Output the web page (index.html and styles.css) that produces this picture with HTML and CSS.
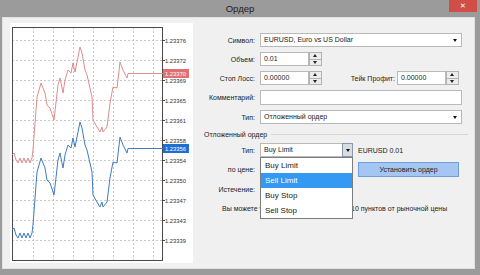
FILE: index.html
```html
<!DOCTYPE html>
<html>
<head>
    <meta charset="UTF-8">
    <title>Ордер</title>
    <link rel="stylesheet" href="styles.css">
</head>
<body>
    <div class="titlebar">
        <span></span>
        <span class="title">Ордер</span>
        <span class="close">&#x2715;</span>
    </div>
    <div class="window-body">
        <div class="chart">
            <svg width="183" height="240" viewBox="10 23 183 240">
                <g class="grid">
                    <line x1="33" y1="27" x2="33" y2="261"/>
                    <line x1="53" y1="27" x2="53" y2="261"/>
                    <line x1="73" y1="27" x2="73" y2="261"/>
                    <line x1="93" y1="27" x2="93" y2="261"/>
                    <line x1="113" y1="27" x2="113" y2="261"/>
                    <line x1="133" y1="27" x2="133" y2="261"/>
                    <line x1="153" y1="27" x2="153" y2="261"/>
                    <line x1="12" y1="40" x2="162" y2="40"/>
                    <line x1="12" y1="60" x2="162" y2="60"/>
                    <line x1="12" y1="80" x2="162" y2="80"/>
                    <line x1="12" y1="100" x2="162" y2="100"/>
                    <line x1="12" y1="120" x2="162" y2="120"/>
                    <line x1="12" y1="140" x2="162" y2="140"/>
                    <line x1="12" y1="160" x2="162" y2="160"/>
                    <line x1="12" y1="180" x2="162" y2="180"/>
                    <line x1="12" y1="200" x2="162" y2="200"/>
                    <line x1="12" y1="220" x2="162" y2="220"/>
                    <line x1="12" y1="240" x2="162" y2="240"/>
                </g>
                <rect class="frame" x="12.5" y="27.5" width="150" height="233"/>
                <g class="ticks">
                    <line x1="162" y1="40.5" x2="165" y2="40.5"/>
                    <line x1="162" y1="60.5" x2="165" y2="60.5"/>
                    <line x1="162" y1="80.5" x2="165" y2="80.5"/>
                    <line x1="162" y1="100.5" x2="165" y2="100.5"/>
                    <line x1="162" y1="120.5" x2="165" y2="120.5"/>
                    <line x1="162" y1="140.5" x2="165" y2="140.5"/>
                    <line x1="162" y1="160.5" x2="165" y2="160.5"/>
                    <line x1="162" y1="180.5" x2="165" y2="180.5"/>
                    <line x1="162" y1="200.5" x2="165" y2="200.5"/>
                    <line x1="162" y1="220.5" x2="165" y2="220.5"/>
                    <line x1="162" y1="240.5" x2="165" y2="240.5"/>
                </g>
                <g class="prices">
                    <text x="165" y="42.5">1.23376</text>
                    <text x="165" y="62.5">1.23372</text>
                    <text x="165" y="82.5">1.23369</text>
                    <text x="165" y="102.5">1.23365</text>
                    <text x="165" y="122.5">1.23361</text>
                    <text x="165" y="142.5">1.23358</text>
                    <text x="165" y="162.5">1.23354</text>
                    <text x="165" y="182.5">1.23350</text>
                    <text x="165" y="202.5">1.23347</text>
                    <text x="165" y="222.5">1.23343</text>
                    <text x="165" y="242.5">1.23339</text>
                </g>
                <polyline class="ask" points="12,155 14,153 16,160 18,163 20,158 22,163 24,158 26,163 28,158 30,163 32,158 33,150 37,97 41,83 45,93 47,105 50,108 54,120 58,85 60,78 63,93 65,80 68,70 71,73 73,63 75,72 77,62 80,47 82,53 85,70 87,75 92,97 93,120 97,127 100,132 102,127 103,132 107,127 110,103 113,87 117,88 120,62 123,70 127,78 128,73.5 163,73.5"/>
                <polyline class="bid" points="12,230 14,228 16,235 18,238 20,233 22,238 24,233 26,238 28,233 30,238 32,233 33,225 37,172 41,158 45,168 47,180 50,183 54,195 58,160 60,153 63,168 65,155 68,145 71,148 73,138 75,147 77,137 80,122 82,128 85,145 87,150 92,172 93,195 97,202 100,207 102,202 103,207 107,202 110,178 113,162 117,163 120,137 123,145 127,153 128,148.5 163,148.5"/>
                <rect class="ask-tag" x="163" y="69" width="26" height="9"/>
                <text class="tag-text" x="165" y="76">1.23370</text>
                <rect class="bid-tag" x="163" y="144" width="26" height="9"/>
                <text class="tag-text" x="165" y="151">1.23356</text>
            </svg>
        </div>

        <div class="form">
            <div class="row">
                <label>Символ:</label>
                <div class="select wide">EURUSD, Euro vs US Dollar<span class="arrow"></span></div>
            </div>
            <div class="row">
                <label>Объем:</label>
                <div class="field">
                    <div class="input">0.01</div>
                    <div class="spin"><span class="up"></span><span class="down"></span></div>
                </div>
            </div>
            <div class="row">
                <label>Стоп Лосс:</label>
                <div class="field">
                    <div class="input">0.00000</div>
                    <div class="spin"><span class="up"></span><span class="down"></span></div>
                    <label class="tp-label">Тейк Профит:</label>
                    <div class="input">0.00000</div>
                    <div class="spin"><span class="up"></span><span class="down"></span></div>
                </div>
            </div>
            <div class="row tall">
                <label>Комментарий:</label>
                <div class="input wide"></div>
            </div>
            <div class="row">
                <label>Тип:</label>
                <div class="select wide">Отложенный ордер<span class="arrow"></span></div>
            </div>

            <div class="group">
                <div class="legend"><span>Отложенный ордер</span></div>
                <div class="row">
                    <label>Тип:</label>
                    <div class="field">
                        <div class="combo">
                            <div class="select short">Buy Limit<span class="drop-btn"><span class="arrow"></span></span></div>
                            <ul class="dropdown">
                                <li>Buy Limit</li>
                                <li class="active">Sell Limit</li>
                                <li>Buy Stop</li>
                                <li>Sell Stop</li>
                            </ul>
                        </div>
                        <span class="lot">EURUSD 0.01</span>
                    </div>
                </div>
                <div class="row price-row">
                    <label>по цене:</label>
                    <div class="field">
                        <div class="input short"></div>
                        <button class="place">Установить ордер</button>
                    </div>
                </div>
                <div class="row">
                    <label>Истечение:</label>
                    <div></div>
                </div>
                <p class="note">Вы можете установить ордер не ближе 10 пунктов от рыночной цены</p>
            </div>
        </div>
    </div>
</body>
</html>
```

FILE: styles.css
```css
* {
    box-sizing: border-box;
}

body {
    margin: 0;
    width: 480px;
    height: 275px;
    overflow: hidden;
    background-color: #9b9b9b;
    font-family: "Liberation Sans", Arial, sans-serif;
    font-size: 7px;
    color: #222;
}

.titlebar {
    display: grid;
    grid-template-columns: 1fr auto 1fr;
    height: 17px;
}

.title {
    font-size: 9.5px;
    color: #1c1c1c;
    padding-top: 3px;
}

.close {
    justify-self: end;
    width: 28px;
    height: 12px;
    margin-right: 3px;
    background-color: #cf4f48;
    color: #fff;
    font-size: 7px;
    line-height: 12px;
    text-align: center;
}

.window-body {
    display: flex;
    height: 252px;
    margin: 0 5px 0 2px;
    background-color: #f0f0f0;
    border: 1px solid #e2e2e2;
}

/* chart */
.chart {
    width: 183px;
    height: 240px;
    margin: 5px 0 0 7px;
    background-color: #fff;
}

.chart svg {
    display: block;
}

.grid line {
    stroke: #c9c9c9;
    stroke-width: 1;
    stroke-dasharray: 2 2;
    shape-rendering: crispEdges;
}

.frame {
    fill: none;
    stroke: #4a4a4a;
    stroke-width: 1;
}

.ticks line {
    stroke: #4a4a4a;
    stroke-width: 1;
}

.prices text,
.tag-text {
    font-family: "Liberation Sans", Arial, sans-serif;
    font-size: 5.8px;
    fill: #333;
}

.tag-text {
    fill: #fff;
}

.ask {
    fill: none;
    stroke: #e08d8d;
    stroke-width: 1;
}

.bid {
    fill: none;
    stroke: #3f7cc2;
    stroke-width: 1;
}

.ask-tag {
    fill: #e27070;
}

.bid-tag {
    fill: #1f6fd2;
}

/* form */
.form {
    width: 268px;
    margin-left: 7px;
    padding-top: 15px;
}

.row {
    display: grid;
    grid-template-columns: 55px 1fr;
    column-gap: 5px;
    align-items: center;
    height: 14px;
    margin-bottom: 5px;
}

.row.tall {
    height: 15px;
}

.row label {
    text-align: right;
    white-space: nowrap;
}

.field {
    display: flex;
    align-items: center;
    height: 100%;
}

.select,
.input {
    position: relative;
    height: 14px;
    line-height: 12px;
    padding-left: 3px;
    background-color: #fff;
    border: 1px solid #b9b9b9;
    white-space: nowrap;
}

.row.tall .input {
    height: 15px;
}

.wide {
    width: 202px;
}

.field .input {
    width: 49px;
}

.field .input.short {
    width: 93px;
}

.arrow {
    position: absolute;
    right: 4px;
    top: 5px;
    border-left: 2.5px solid transparent;
    border-right: 2.5px solid transparent;
    border-top: 3px solid #111;
}

.spin {
    display: flex;
    flex-direction: column;
    width: 13px;
    height: 14px;
}

.spin span {
    position: relative;
    flex: 1;
    background-color: #ececec;
    border: 1px solid #b3b3b3;
}

.spin .down {
    border-top: none;
}

.spin .up::after,
.spin .down::after {
    content: "";
    position: absolute;
    left: 3px;
    border-left: 2.5px solid transparent;
    border-right: 2.5px solid transparent;
}

.spin .up::after {
    top: 1px;
    border-bottom: 3px solid #222;
}

.spin .down::after {
    top: 1px;
    border-top: 3px solid #222;
}

.tp-label {
    width: 75px;
    padding-right: 2px;
}

/* pending order group */
.group {
    margin-top: 4px;
}

.legend {
    display: flex;
    align-items: center;
    height: 10px;
    margin: 0 0 4px 4px;
}

.legend::after {
    content: "";
    flex: 1;
    height: 1px;
    margin-left: 4px;
    background-color: #d7d7d7;
}

.combo {
    position: relative;
}

.select.short {
    width: 93px;
}

.drop-btn {
    position: absolute;
    right: -1px;
    top: -1px;
    width: 11px;
    height: 14px;
    background-color: #d8dde4;
    border: 1px solid #8a98aa;
}

.drop-btn .arrow {
    right: 2px;
}

.dropdown {
    position: absolute;
    left: 0;
    top: 14px;
    z-index: 2;
    width: 93px;
    margin: 0;
    padding: 0;
    list-style: none;
    background-color: #fff;
    border: 1px solid #7d7d7d;
    font-size: 8px;
}

.dropdown li {
    height: 15px;
    line-height: 15px;
    padding-left: 4px;
    color: #222;
}

.dropdown li.active {
    background-color: #3399f3;
    color: #fff;
}

.lot {
    margin-left: 5px;
}

.price-row {
    height: 15px;
    margin-top: 3px;
    margin-bottom: 5px;
}

.place {
    width: 101px;
    height: 15px;
    margin-left: 5px;
    padding: 0;
    background-color: #a5c6f2;
    border: 1px solid #6e9fdb;
    font-family: "Liberation Sans", Arial, sans-serif;
    font-size: 7px;
    color: #222;
}

.note {
    margin: 7px 0 0 22px;
    line-height: 12px;
    white-space: nowrap;
}
```
